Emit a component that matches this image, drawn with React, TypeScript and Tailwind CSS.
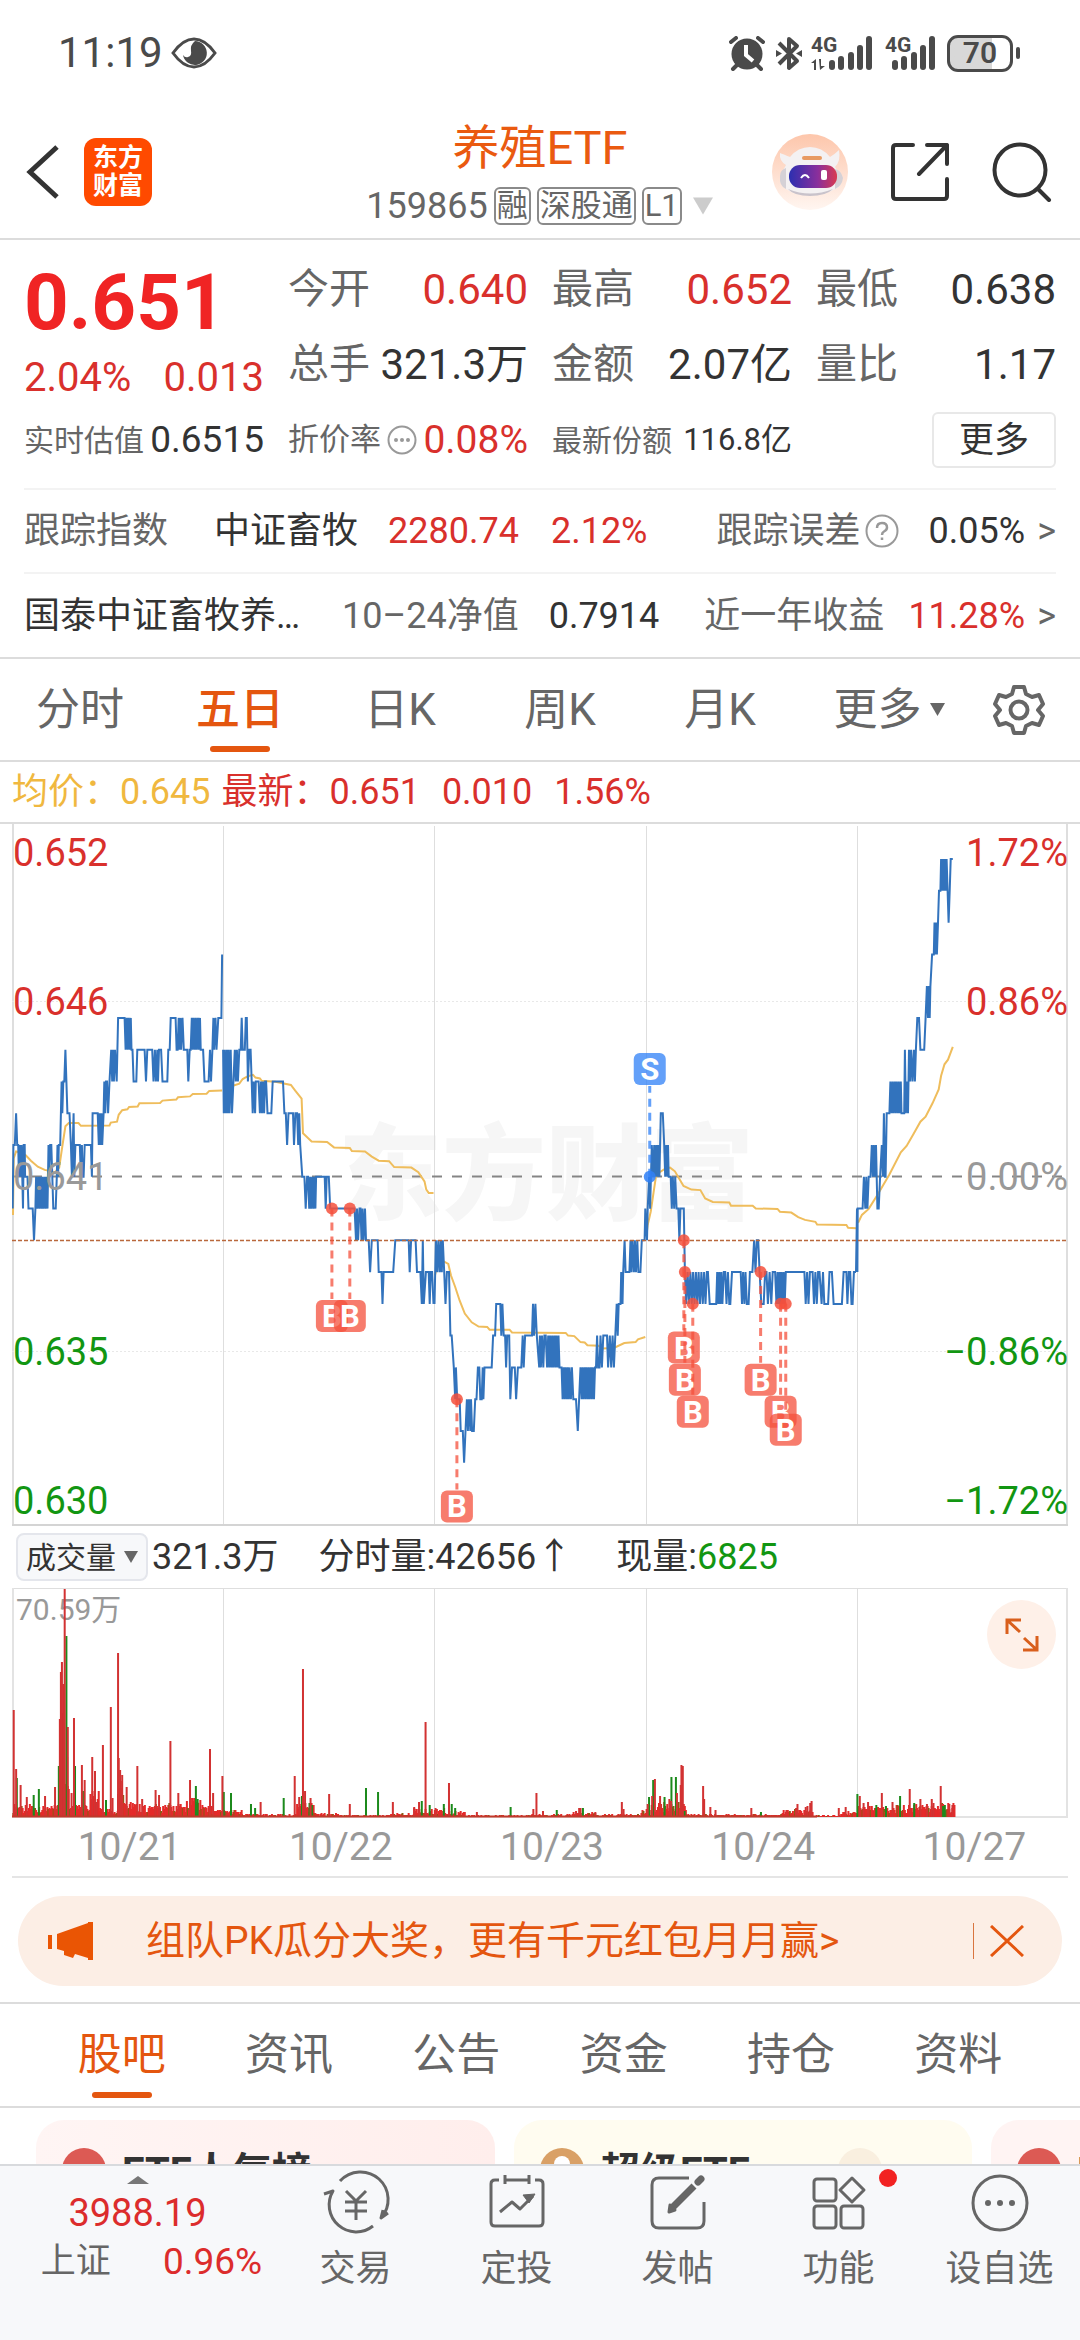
import React, {useState} from 'react';

type Point = [number, number];

// price chart: one unit is a tick of 0.001 round the previous close 0.641
const toX = (t: number) => (t - 35) / 2.904;
const toY = (u: number) => (u - 11) / 2.178 + 2;
const tick = (level: number) => 775 - 69.2 * level;

const swing = (from: number, to: number, a: number, b: number, step = 3): Point[] => {
    const out: Point[] = [];
    for (let t = from, i = 0; t <= to; t += step, i++) {
        out.push([t, i % 2 ? b : a]);
    }
    return out;
};

const shift = (points: Point[]): Point[] => points.map(([t, v]) => [t + 1568, v]);

const price: Point[][] = [
    [
        [36, 0], [37, -1], [39, 1], [43, 1], [47, 2], [50, 1], [53, 1], [55, 0], [57, 1], [60, 0], [63, 1], [67, -1], [69, 1],
        [72, 1], [73, 0], [80, 0], [83, -1], [95, -1], [99, -2], [103, -1], [105, 0], ...swing(108, 138, -1, 0), [141, 1],
        [143, 0], [146, 1], [149, 1], [152, 0], [155, -1], [162, -1], [165, 0], [167, 1], [169, 0], [171, 1], [175, 1],
        [179, 3], [181, 2], [184, 3], [187, 3], [190, 4], [193, 3], [196, 2], [202, 2], [206, 1], [209, 0], [214, 2],
        [216, 0], [219, 1], [232, 1], [235, 0], [238, 1], [240, 0], [243, 0], [246, 1], [264, 1], [267, 0], [269, 2],
        [284, 2], [287, 1], [289, 2], [291, 1], [295, 2], [297, 1], [301, 2], [303, 3], [306, 2], [308, 3], [311, 3],
        [314, 2], [318, 3], [323, 4], [326, 3], [329, 4], [331, 3], [334, 4], [339, 3], [343, 5], [362, 5], [365, 4],
        [368, 5], [371, 4], [374, 5], [377, 4], [380, 5], [382, 4], [385, 4], [388, 3], [396, 3], [399, 4], [420, 4],
        [424, 3], [428, 4], [442, 4], [446, 3], [450, 4], [453, 3], [457, 4], [459, 3], [462, 4], [468, 4], [472, 3],
        [486, 3], [489, 4], [493, 4], [496, 5], [510, 5], [513, 4], [516, 4], [519, 5], [521, 4], [524, 5], [526, 4],
        [530, 5], [534, 4], [544, 4], [547, 3], [551, 4], [554, 4], ...swing(557, 581, 5, 4), [583, 4], [590, 4],
        [594, 3], [606, 3], [610, 4], [613, 3], [617, 4], [620, 5], [622, 4], [626, 5], [629, 4], [634, 5], [643, 5], [645, 7],
    ],
    [
        [648, 4], [650, 2], [653, 4], [656, 2], [659, 4], [661, 2], [664, 4], [667, 2], [670, 4], [674, 2], [678, 3],
        [682, 4], [685, 3], [688, 4], [691, 3], [695, 4], [699, 4], [702, 5], [705, 4], [711, 4], [714, 5], [717, 5],
        [720, 3], [724, 4], [728, 4], [731, 3], [734, 2], [737, 3], [741, 2], [743, 3], [751, 3], [755, 2], [758, 3],
        [761, 2], [764, 3], [767, 2], [770, 3], [773, 3], [777, 2], [788, 2], [792, 3], [822, 3], [826, 2], [830, 2],
        [834, 1], [838, 2], [851, 2], [854, 1], [858, 2], [863, 2], [866, 1], [869, 2], [872, 1], [878, 0], [884, 0],
        [888, -1], [892, 0], [895, 0], ...swing(898, 916, -1, 0), [918, 0], [943, 0], [946, -1], [949, 0], [955, 0],
        [959, -1], [1030, -1], [1034, -2], [1037, -1], [1040, -2], [1044, -1], [1047, -1], [1050, -2], [1053, -1],
        [1056, -2], [1060, -1], [1063, -2], [1071, -2], [1075, -3], [1080, -2], [1097, -2], [1100, -3], [1108, -3],
        [1111, -4], [1114, -3], [1142, -3], [1148, -2], [1187, -2], [1190, -3], [1194, -2], [1207, -2], [1211, -3],
        [1221, -3], [1225, -4], [1228, -2], [1231, -4], [1237, -3], [1245, -3], [1248, -4], [1251, -3], [1255, -3], [1259, -4],
    ],
    [
        [1262, -4], [1266, -2], [1270, -3], [1273, -2], [1277, -3], [1280, -2], [1283, -3], [1286, -2], [1290, -3],
        [1294, -4], [1298, -3], [1304, -3], [1308, -5], [1312, -5], [1318, -6], [1322, -7], [1324, -6], [1328, -7],
        [1335, -7], [1338, -8], [1344, -8], [1348, -9], [1352, -8], [1356, -7], [1359, -8], [1362, -7], [1366, -8],
        [1368, -7], [1371, -8], [1376, -8], [1380, -7], [1384, -7], [1388, -6], [1392, -6], [1395, -7], [1399, -7],
        [1402, -6], [1404, -7], [1407, -6], [1428, -6], [1432, -5], [1438, -5], [1441, -4], [1453, -4], [1456, -5],
        [1459, -4], [1463, -5], [1467, -5], [1470, -6], [1473, -5], [1479, -5], [1482, -7], [1487, -6], [1495, -6],
        [1499, -7], [1504, -6], [1514, -6], [1518, -5], [1521, -6], [1525, -5], [1545, -5], [1548, -4], [1551, -5],
        [1555, -4], [1559, -5], [1566, -6],
        ...shift([
            [0, -5], [3, -6], [6, -5], [10, -6], [13, -5], [17, -5], [21, -6], ...swing(24, 54, -5, -6), [57, -6], [63, -6],
            ...swing(66, 84, -7, -6), [86, -6], [90, -7], [93, -6], [97, -7], [105, -7], [110, -8], [114, -7],
            ...swing(118, 160, -6, -7), [163, -6], [166, -5], [169, -6], [173, -6], [176, -5], [180, -6], [184, -5],
            [195, -5], [198, -6], [203, -5], [207, -6], [211, -5], [215, -6], [219, -5], [223, -4], [226, -5], [229, -4],
            [234, -4], [236, -3], [240, -4], [242, -3], [246, -2], [249, -3], [260, -3], [263, -2], [266, -3], [269, -2],
            [273, -3], [276, -2], [279, -3], [283, -2], [286, -3], [292, -3], [296, -2], [304, -2],
        ]),
    ],
    shift([
        [304, -2], [306, -1], [311, -2], [313, -1], [317, 0], [320, -1], [325, 1], [329, 0], [332, 1], [335, 0], [338, 1], [341, 0],
        [344, 1], [347, 0], [351, 2], [357, 2], [361, 1], [364, 0], [367, 1], [370, 0], [372, 1], [374, 0], [380, 0],
        [383, -1], [386, 0], [390, -1], [393, 0], [397, -1], [402, -1], [405, -2], [408, -1], [418, -1], [421, -3],
        ...swing(425, 485, -4, -3, 4), [488, -3], [493, -4], [508, -4], ...swing(512, 532, -4, -3), [534, -3], [538, -3],
        [542, -4], [546, -3], [550, -4], [553, -4], [558, -3], [583, -3], [587, -4], [590, -3], [594, -4], [597, -3],
        [601, -4], [606, -4], [610, -3], [617, -3], [622, -2], [626, -3], [630, -2], [634, -2], [638, -3], [643, -4],
        [650, -4], [654, -3], [658, -3], [662, -4], [667, -3], [672, -4], [676, -3], [683, -3], ...swing(687, 711, -4, -3),
        [714, -3], [768, -3], [772, -4], [776, -3], [780, -4], [784, -3], [792, -3], [796, -4], [800, -3], [804, -4],
        [808, -3], [812, -3], [818, -4], [822, -3], [826, -4], [837, -4], [841, -3], [848, -3], [853, -4], [877, -4],
        [882, -3], [890, -3], [893, -4], [897, -3], [901, -3], [905, -4], [908, -4], [912, -3], [918, -3],
    ]),
    shift([
        [918, -3], [921, -1], [922, -3], [923, -1], [937, -1], [941, 0], [945, -1], [948, 0], [951, -1], [955, 0], [960, 0], [964, 1],
        [967, 0], [970, 1], [973, 0], [976, 1], [980, -1], [984, -1], [988, 0], [993, 1], [996, 0], [999, 2], [1002, 0],
        [1004, 0], [1007, 2], [1015, 2], ...swing(1018, 1048, 3, 2), [1050, 2], [1058, 2], [1060, 4], [1063, 2],
        [1066, 3], [1069, 2], [1072, 4], [1075, 3], [1078, 4], [1082, 3], [1086, 4], [1089, 3], [1092, 4], [1096, 5],
        [1101, 5], [1105, 4], [1116, 4], [1120, 5], [1124, 6], [1127, 5], [1130, 6], [1132, 5], [1134, 6], [1139, 7],
        [1144, 7], [1146, 8], [1149, 7], [1151, 8], [1153, 7], [1156, 8], [1159, 9], [1163, 9], ...swing(1165, 1181, 10, 9, 2),
        [1184, 9], [1187, 8], [1190, 9], [1193, 10], [1199, 10],
    ]),
];

const average: Point[][] = [
    [
        [38, 858], [40, 735], [47, 720], [60, 722], [75, 728], [90, 740], [110, 753], [130, 760], [160, 765], [172, 755],
        [180, 715], [190, 665], [200, 658], [228, 658], [235, 664], [318, 663], [322, 657], [340, 655], [345, 640],
        [355, 630], [370, 628], [375, 623], [400, 622], [405, 615], [465, 614], [472, 609], [512, 607], [517, 602],
        [552, 600], [560, 595], [600, 594], [608, 588], [645, 587],
    ],
    [
        [650, 590], [660, 582], [672, 578], [695, 572], [705, 562], [720, 556], [735, 553], [742, 559], [755, 561],
        [760, 566], [800, 568], [845, 575], [858, 588], [876, 605], [880, 680], [890, 687], [905, 698], [950, 699],
        [970, 711], [1016, 712], [1022, 719], [1060, 720], [1080, 731], [1100, 740], [1130, 741], [1145, 754],
        [1195, 755], [1215, 765], [1233, 785], [1238, 803], [1245, 810], [1259, 810],
    ],
    [
        [1263, 990], [1268, 975], [1278, 958], [1290, 960], [1302, 965], [1310, 990], [1322, 1015], [1335, 1045],
        [1350, 1073], [1370, 1092], [1390, 1101], [1415, 1102], [1422, 1108], [1480, 1108], [1487, 1114],
        ...shift([
            [75, 1115], [82, 1121], [100, 1122], [118, 1135], [130, 1136], [138, 1142], [170, 1143], [182, 1149],
            [215, 1148], [245, 1137], [278, 1135], [285, 1129], [306, 1124],
        ]),
    ],
    shift([
        [309, 905], [313, 880], [322, 850], [330, 810], [337, 775], [348, 765], [365, 757], [378, 755], [392, 763],
        [405, 780], [417, 795], [440, 803], [466, 804], [480, 822], [502, 830], [550, 831], [555, 838], [618, 838],
        [627, 844], [690, 845], [697, 851], [730, 853], [750, 863], [770, 869], [800, 873], [805, 879], [890, 880],
        [895, 886], [918, 887],
    ]),
    shift([
        [924, 875], [935, 858], [955, 845], [980, 815], [1015, 770], [1048, 722], [1065, 708], [1085, 682], [1105, 655],
        [1120, 644], [1140, 615], [1158, 585], [1165, 555], [1175, 530], [1185, 520], [1199, 492],
    ]),
];

const trades = [
    {t: 964, level: -1, box: 1078, side: 'B'},
    {t: 1016, level: -1, box: 1078, side: 'B'},
    {t: 1327, level: -7, box: 1493, side: 'B'},
    {t: 1986, level: -2, box: 1147, side: 'B'},
    {t: 1989, level: -3, box: 1217, side: 'B'},
    {t: 2012, level: -4, box: 1287, side: 'B'},
    {t: 2209, level: -3, box: 1217, side: 'B'},
    {t: 2267, level: -4, box: 1287, side: 'B'},
    {t: 2282, level: -4, box: 1326, side: 'B'},
    {t: 1887, level: 0, box: 540, side: 'S'},
];

const redBars: Point[] = [
    [40, 107], [47, 48], [60, 32], [78, 20], [131, 21], [160, 30], [174, 98], [177, 145], [180, 155], [184, 133], [188, 228],
    [197, 90], [215, 99], [208, 24], [238, 52], [246, 37], [268, 60], [276, 46], [281, 15], [299, 72], [322, 110], [327, 19],
    [343, 164], [345, 59], [349, 47], [355, 42], [351, 36], [368, 30], [399, 51], [413, 18], [452, 27], [462, 22], [495, 76], [518, 24],
    [552, 37], [610, 68], [619, 24], [646, 41], [757, 15], [856, 41], [880, 148], [886, 26], [869, 20], [902, 19], [956, 23],
    [1016, 13], [1141, 15], [1236, 95], [1217, 15], [1203, 10], [1304, 34], [1265, 9], [1385, 5], [1558, 24], [1549, 8],
    [1577, 6], [1673, 6], [1682, 9], [1686, 9], [1729, 5], [1806, 15], [1811, 8], [1881, 13], [1894, 21], [1902, 38], [1917, 21],
    [1944, 18], [1949, 16], [1966, 24], [1977, 32], [1979, 52], [1983, 51], [2042, 31], [2045, 18], [2063, 10], [2078, 7],
    [2182, 9], [2284, 7], [2312, 9], [2316, 13], [2340, 10], [2345, 11], [2353, 14], [2357, 16], [2436, 9], [2456, 10],
    [2497, 21], [2508, 14], [2521, 15], [2561, 24], [2592, 15], [2642, 28], [2673, 18], [2692, 13], [2706, 18], [2711, 14],
    [2732, 31], [2757, 13], [2766, 12],
];

const greenBars: Point[] = [
    [49, 39], [98, 22], [113, 28], [171, 51], [183, 104], [193, 181], [195, 60], [218, 51], [241, 26], [308, 17], [569, 31],
    [574, 18], [650, 25], [671, 24], [729, 13], [741, 9], [824, 19], [877, 21], [899, 14], [906, 12], [1063, 29], [1098, 25],
    [1225, 16], [1248, 12], [1289, 13], [1312, 13], [1322, 9], [1483, 10], [1617, 7], [1693, 9], [1885, 20], [1897, 37],
    [1930, 20], [1950, 40], [1963, 40], [1988, 6], [2210, 5], [2490, 23], [2545, 12], [2573, 11], [2614, 21], [2655, 14],
    [2744, 12], [2739, 11],
];

// background turnover: from, to, highest bar
const turnover: [number, number, number][] = [
    [36, 96, 14], [96, 170, 12], [170, 200, 40], [200, 260, 12], [260, 285, 26], [285, 340, 9], [340, 362, 34], [362, 385, 21],
    [385, 420, 15], [420, 480, 13], [480, 540, 14], [540, 585, 20], [585, 615, 13], [615, 700, 7], [700, 860, 3],
    [860, 910, 14], [910, 980, 4], [980, 1130, 2], [1130, 1200, 4], [1200, 1290, 9], [1290, 1350, 6], [1350, 1540, 2],
    [1540, 1660, 3], [1660, 1730, 5], [1730, 1860, 3], [1860, 1890, 8], [1890, 1990, 15], [1990, 2270, 3],
    [2270, 2360, 8], [2360, 2440, 2], [2440, 2490, 6], [2490, 2640, 12], [2640, 2770, 14],
];

const noise = turnover.flatMap(([from, to, top], row) => {
    const bars = [];
    for (let t = from, i = row * 7; t < to; t += 3, i++) {
        const r = Math.abs(Math.sin(i * 12.9898) * 43758.5453) % 1;
        bars.push({t, h: Math.max(1, Math.round(top * (0.3 + r * 0.7))), green: (i * 5) % 13 < 2});
    }
    return bars;
});

const line = (points: Point[]) => points.map(([t, v]) => `${toX(t).toFixed(1)},${toY(v).toFixed(1)}`).join(' ');

const Label = ({x = 1, y, color, end, children}: any) => (
    <text x={x} y={y} fill={color} fontSize="38" textAnchor={end ? 'end' : 'start'}>{children}</text>
);

const PriceChart = () => (
    <svg viewBox="0 0 1056 702" className="block w-full" role="img" aria-label="五日">
        <text x="534" y="388" textAnchor="middle" fontSize="104" fontWeight="900" fill="#f6f6f6">东方财富</text>
        <g stroke="#dedede">
            {[211, 422, 634, 845].map((x) => <path key={x} d={`M${x}.5 2V701`}/>)}
            <path d="M1 0V702M1055 0V702" strokeWidth="2"/>
            <path d="M0 701H1056" strokeWidth="2" stroke="#d4d4d4"/>
            <path d="M0 177.500H1056M0 527.500H1056" strokeDasharray="2 2" stroke="#e8e8e8"/>
        </g>
        <Label y="42" color="#d9302c">0.652</Label>
        <Label y="191" color="#d9302c">0.646</Label>
        <Label y="541" color="#129612">0.635</Label>
        <Label y="690" color="#129612">0.630</Label>
        <Label x="1056" y="42" end color="#d9302c">1.72%</Label>
        <Label x="1056" y="191" end color="#d9302c">0.86%</Label>
        <Label x="1056" y="541" end color="#129612">−0.86%</Label>
        <Label x="1056" y="690" end color="#129612">−1.72%</Label>
        <path d="M0 352.500H1056" stroke="#858585" strokeWidth="2" strokeDasharray="10 10"/>
        {average.map((day, index) => (
            <polyline key={index} points={line(day)} fill="none" stroke="#efbd5c" strokeWidth="2"/>
        ))}
        {price.map((day, index) => (
            <polyline
                key={index}
                points={line(day.map(([t, level]) => [t, tick(level)]))}
                fill="none"
                stroke="#3273bd"
                strokeWidth="2"
            />
        ))}
        <path d="M0 416.500H1056" stroke="#b9683c" strokeWidth="1.500" strokeDasharray="4 2"/>
        <Label y="366" color="#999">0.641</Label>
        <Label x="1056" y="366" end color="#999">0.00%</Label>
        {trades.map(({t, level, box, side}) => {
            const x = toX(t);
            const y = toY(tick(level));
            const boxY = toY(box);
            const color = side === 'B' ? '#f4503c' : '#2f80f7';
            return (
                <g key={t}>
                    <path
                        d={`M${x} ${y}V${side === 'B' ? boxY - 17 : boxY + 17}`}
                        stroke={color}
                        strokeWidth="3"
                        strokeOpacity=".75"
                        strokeDasharray="8 6"
                    />
                    <circle cx={x} cy={y} r="6" fill={color} fillOpacity=".85"/>
                    <rect x={x - 16} y={boxY - 16} width="32" height="32" rx="6" fill={color} fillOpacity=".75"/>
                    <text x={x} y={boxY + 11} textAnchor="middle" fontSize="31" fontWeight="700" fill="#fff">{side}</text>
                </g>
            );
        })}
    </svg>
);

const VolumeChart = () => (
    <svg viewBox="0 0 1056 230" className="block w-full" role="img" aria-label="成交量">
        <path d="M211.500 0V229M422.500 0V229M634.500 0V229M845.500 0V229M0 .5H1056" stroke="#dedede"/>
        <path d="M1 0V230M1055 0V230M0 229H1056" stroke="#e3e3e3" strokeWidth="2"/>
        <text x="4" y="32" fontSize="30" fill="#999">70.59万</text>
        {noise.map(({t, h, green}) => (
            <rect key={t} x={toX(t)} y={229 - h} width="2" height={h} fill={green ? '#8a5a14' : '#e42a2a'}/>
        ))}
        {greenBars.map(([t, h]) => <rect key={t} x={toX(t) - 1} y={229 - h} width="2" height={h} fill="#1c8a1c"/>)}
        {redBars.map(([t, h]) => <rect key={t} x={toX(t) - 1} y={229 - h} width="2" height={h} fill="#d23232"/>)}
        <path d="M0 228.500H805" stroke="#c0392b" strokeWidth="2"/>
    </svg>
);

const Caret = ({className}: { className: string }) => (
    <svg viewBox="0 0 14 14" className={className} aria-hidden="true"><path d="M0 1H14L7 13Z" fill="currentColor"/></svg>
);

const StatusBar = () => (
    <div className="flex h-[100px] items-center justify-between pt-[6px] pr-[60px] pl-[58px] text-[#4a4a4a]">
        <div className="flex items-center gap-2">
            <span className="text-[42px] leading-none">11:19</span>
            <svg viewBox="0 0 46 32" className="h-8 w-[46px]" fill="none">
                <path d="M2 16Q12 2 23 2T44 16Q34 30 23 30T2 16Z" stroke="currentColor" strokeWidth="3"/>
                <path d="M24 4A12 12 0 1 1 12 18Q14 21 17 20Q21 19 20 14Q19 8 24 4Z" fill="currentColor"/>
            </svg>
        </div>
        <div className="flex items-center">
            <svg viewBox="0 0 36 35" className="h-[35px] w-9" fill="none" stroke="currentColor">
                <circle cx="18" cy="18" r="15.500" fill="currentColor" stroke="none"/>
                <path d="M2 6 7 2M34 6 29 2M8 29 4 33M28 29 32 33" strokeWidth="4" strokeLinecap="round"/>
                <path d="M17 9V19L24 25" stroke="#fff" strokeWidth="4"/>
            </svg>
            <svg viewBox="0 0 26 35" className="ml-[11px] h-[35px] w-[26px]" fill="none" stroke="currentColor" strokeWidth="4">
                <path d="M3 7 21 25 13 32V3L21 10 3 28" strokeLinejoin="round"/>
                <path d="M0 14 6 17.500 0 21ZM26 14 20 17.500 26 21Z" fill="currentColor" stroke="none"/>
            </svg>
            <svg viewBox="0 0 62 36" className="ml-[9px] h-9 w-[62px] overflow-visible" fill="currentColor">
                <text x="0" y="17" fontSize="21" fontWeight="700">4G</text>
                <path d="M0 28 5 24V35H3V28ZM8 24H10V31H14L9 35Z"/>
                <rect x="18" y="25" width="6" height="10" rx="3"/>
                <rect x="27" y="21" width="6" height="14" rx="3"/>
                <rect x="37" y="17" width="6" height="18" rx="3"/>
                <rect x="46" y="10" width="6" height="25" rx="3"/>
                <rect x="55" y="1" width="6" height="34" rx="3"/>
            </svg>
            <svg viewBox="0 0 50 36" className="ml-3 h-9 w-[50px] overflow-visible" fill="currentColor">
                <text x="0" y="17" fontSize="21" fontWeight="700">4G</text>
                <rect x="7" y="25" width="6" height="10" rx="3"/>
                <rect x="16" y="21" width="6" height="14" rx="3"/>
                <rect x="26" y="17" width="6" height="18" rx="3"/>
                <rect x="35" y="10" width="6" height="25" rx="3"/>
                <rect x="44" y="1" width="6" height="34" rx="3"/>
            </svg>
            <div className="ml-3 flex h-[37px] w-[66px] items-center justify-center rounded-[11px] border-[3px] border-current bg-linear-to-r from-[#d8d8d8] from-70% to-white to-70% text-[30px] leading-none font-semibold">
                70
            </div>
            <div className="ml-[3px] h-3 w-1 rounded-sm bg-current"/>
        </div>
    </div>
);

const Robot = () => (
    <svg viewBox="0 0 76 76" className="size-[76px]">
        <defs>
            <linearGradient id="halo" x2="0" y2="1"><stop stopColor="#fdc6ab"/><stop offset="1" stopColor="#fff6f1"/></linearGradient>
            <linearGradient id="visor"><stop stopColor="#2c2fb0"/><stop offset=".6" stopColor="#8a2f9c"/><stop offset="1" stopColor="#d93a50"/></linearGradient>
        </defs>
        <circle cx="38" cy="38" r="38" fill="url(#halo)"/>
        <path d="M8 19Q11 20 18 23Q26 13 38 13T58 23Q63 20 67 16Q69 27 63 33L70 44Q70 53 63 55Q54 61 38 61T14 55Q8 52 8 42L14 31Q7 27 8 19Z" fill="#f4f1f2"/>
        <path d="M8 42Q8 36 14 34V55Q7 52 8 42ZM71 44Q69 36 63 35V55Q70 52 71 44Z" fill="#d5d1d6"/>
        <path d="M16 55Q38 64 61 55Q54 62 38 62T16 55Z" fill="#c9c3cb"/>
        <rect x="30" y="22" width="20" height="4" rx="2" fill="#e89a62"/>
        <rect x="17" y="31" width="48" height="23" rx="11" fill="url(#visor)"/>
        <path d="M29 44Q33 38 37 44" fill="none" stroke="#fff" strokeWidth="2"/>
        <rect x="49" y="36" width="6" height="10" rx="2" fill="#fff"/>
    </svg>
);

const Tag = ({children}: any) => (
    <span className="rounded-md border-2 border-[#8a8a8a] px-px text-[31px] leading-[34px]">{children}</span>
);

const Header = () => (
    <header className="flex h-[140px] items-center justify-between border-b-2 border-[#dcdcdc] pt-[6px] pr-[28px] pl-[26px]">
        <div className="flex w-[282px] items-center gap-6">
            <button type="button" aria-label="返回">
                <svg viewBox="0 0 34 56" className="h-14 w-[34px]" fill="none" stroke="#333" strokeWidth="5">
                    <path d="M31 3 4 28 31 53"/>
                </svg>
            </button>
            <div className="flex size-[68px] flex-col items-center justify-center rounded-xl bg-[#ff4a00] text-[25px] leading-[28px] font-bold text-white">
                <span>东方</span>
                <span>财富</span>
            </div>
        </div>
        <div className="flex flex-col items-center pt-[2px]">
            <h1 className="text-[47px] leading-[66px] text-[#ea5a10]">养殖ETF</h1>
            <div className="flex items-center gap-[6px] text-[36px] leading-[50px] text-[#666]">
                <span>159865</span>
                <Tag>融</Tag>
                <Tag>深股通</Tag>
                <Tag>L1</Tag>
                <Caret className="ml-1 h-5 w-[22px] text-[#ccc]"/>
            </div>
        </div>
        <div className="flex w-[280px] items-center justify-between">
            <Robot/>
            <button type="button" aria-label="分享">
                <svg viewBox="0 0 58 58" className="size-[58px]" fill="none" stroke="#333" strokeWidth="4" strokeLinecap="round" strokeLinejoin="round">
                    <path d="M22 2H5Q2 2 2 5V53Q2 56 5 56H53Q56 56 56 53V36M36 2H56V21M56 2 28 31"/>
                </svg>
            </button>
            <button type="button" aria-label="搜索">
                <svg viewBox="0 0 60 60" className="size-[60px]" fill="none" stroke="#333" strokeWidth="4" strokeLinecap="round">
                    <circle cx="28" cy="28" r="25.500"/>
                    <path d="M46 47 57 58"/>
                </svg>
            </button>
        </div>
    </header>
);

const Quote = ({label, value, red}: { label: string, value: string, red?: boolean }) => (
    <div className="flex items-center justify-between whitespace-nowrap">
        <span className="text-[41px] text-[#666]">{label}</span>
        <span className={red ? 'text-[42px] text-[#d9302c]' : 'text-[42px] text-[#333]'}>{value}</span>
    </div>
);

const Quotes = () => (
    <section className="px-6 whitespace-nowrap">
        <div className="grid grid-cols-4 gap-x-6">
            <div className="flex flex-col pt-6 text-[#d9302c]">
                <strong className="text-[78px] leading-[78px] font-bold text-[#f02424]">0.651</strong>
                <div className="flex justify-between pt-2 text-[40px] leading-[56px]">
                    <span>2.04%</span>
                    <span>0.013</span>
                </div>
            </div>
            <div className="col-span-3 grid grid-cols-3 gap-x-6 pt-3 pb-1 leading-[75px]">
                <Quote label="今开" value="0.640" red/>
                <Quote label="最高" value="0.652" red/>
                <Quote label="最低" value="0.638"/>
                <Quote label="总手" value="321.3万"/>
                <Quote label="金额" value="2.07亿"/>
                <Quote label="量比" value="1.17"/>
            </div>
        </div>
        <div className="grid h-[84px] grid-cols-4 items-center gap-x-6 border-b-2 border-[#f3f3f3] pb-[14px] text-[#333]">
            <div className="flex items-center justify-between">
                <span className="text-[30px] text-[#666]">实时估值</span>
                <span className="text-[37px]">0.6515</span>
            </div>
            <div className="flex items-center justify-between">
                <span className="text-[31px] text-[#666]">折价率</span>
                <svg viewBox="0 0 30 30" className="size-[30px] text-[#999]" fill="currentColor">
                    <circle cx="15" cy="15" r="13.500" fill="none" stroke="currentColor" strokeWidth="2"/>
                    <circle cx="9" cy="15" r="2"/><circle cx="15" cy="15" r="2"/><circle cx="21" cy="15" r="2"/>
                </svg>
                <span className="text-[39px] text-[#d9302c]">0.08%</span>
            </div>
            <div className="flex items-center justify-between">
                <span className="text-[30px] text-[#666]">最新份额</span>
                <span className="text-[31px]">116.8亿</span>
            </div>
            <button type="button" className="h-14 w-[124px] justify-self-end rounded-md border-2 border-[#e8e8e8] text-[35px] leading-none">更多</button>
        </div>
        <div className="flex h-[84px] items-center border-b-2 border-[#f3f3f3] text-[36px] text-[#333]">
            <span className="text-[#666]">跟踪指数</span>
            <span className="ml-[46px]">中证畜牧</span>
            <span className="ml-[30px] text-[#d9302c]">2280.74</span>
            <span className="ml-8 text-[#d9302c]">2.12%</span>
            <span className="ml-auto text-[#666]">跟踪误差</span>
            <svg viewBox="0 0 34 34" className="ml-1 size-[34px] text-[#999]" fill="none" stroke="currentColor" strokeWidth="2">
                <circle cx="17" cy="17" r="15.500"/>
                <path d="M12 14Q12 9 17 9T22 13.500Q22 16 19 17.500Q17 18.500 17 21M17 23.500V26" strokeWidth="2.500"/>
            </svg>
            <span className="ml-[30px]">0.05%</span>
            <span className="ml-3 text-[#666]">&gt;</span>
        </div>
        <div className="flex h-[83px] items-center text-[36px] text-[#333]">
            <span>国泰中证畜牧养…</span>
            <span className="ml-[42px] text-[#666]">10–24净值</span>
            <span className="ml-[30px]">0.7914</span>
            <span className="ml-auto text-[#666]">近一年收益</span>
            <span className="ml-6 text-[#d9302c]">11.28%</span>
            <span className="ml-3 text-[#666]">&gt;</span>
        </div>
    </section>
);

const periods = ['分时', '五日', '日K', '周K', '月K'];

const PeriodTabs = () => {
    const [active, setActive] = useState('五日');

    return (
        <nav className="flex h-[105px] items-stretch border-y-2 border-[#dcdcdc] pr-5 text-[44px] text-[#666]">
            {periods.map((period) => (
                <button
                    key={period}
                    type="button"
                    onClick={() => setActive(period)}
                    className={`relative flex-[160] ${active === period ? 'font-medium text-[#e4560f]' : ''}`}
                >
                    {period}
                    {active === period && (
                        <span className="absolute bottom-2 left-1/2 h-[6px] w-[60px] -translate-x-1/2 rounded-full bg-[#e4560f]"/>
                    )}
                </button>
            ))}
            <button type="button" className="flex flex-[178] items-center justify-center gap-2">
                更多
                <Caret className="size-[15px]"/>
            </button>
            <button type="button" aria-label="设置" className="flex flex-[82] items-center justify-center">
                <svg viewBox="0 0 52 52" className="size-[52px]" fill="none" stroke="currentColor" strokeWidth="4" strokeLinejoin="round">
                    <path d="M21 3H31L33 10L39 13L46 11L50 20L45 26L50 32L46 41L39 39L33 42L31 49H21L19 42L13 39L6 41L2 32L7 26L2 20L6 11L13 13L19 10Z"/>
                    <circle cx="26" cy="26" r="8.500"/>
                </svg>
            </button>
        </nav>
    );
};

const boardTabs = ['股吧', '资讯', '公告', '资金', '持仓', '资料'];

const BoardTabs = () => {
    const [active, setActive] = useState('股吧');

    return (
        <nav className="flex h-[106px] shrink-0 border-y-2 border-[#dcdcdc] px-[38px] text-[44px] text-[#666]">
            {boardTabs.map((tab) => (
                <button
                    key={tab}
                    type="button"
                    onClick={() => setActive(tab)}
                    className={`relative flex-1 ${active === tab ? 'text-[#e4560f]' : ''}`}
                >
                    {tab}
                    {active === tab && (
                        <span className="absolute bottom-2 left-1/2 h-[6px] w-[60px] -translate-x-1/2 rounded-full bg-[#e4560f]"/>
                    )}
                </button>
            ))}
        </nav>
    );
};

const Banner = () => (
    <div className="mx-[18px] mt-[18px] mb-4 flex h-[90px] items-center rounded-full bg-[#fceee5] pr-[38px] pl-[30px] text-[#e4560f]">
        <svg viewBox="0 0 46 38" className="h-[38px] w-[46px]" fill="#ea5504">
            <path d="M0 13H4V27H0ZM9 12 40 1V0H45V38H40V36L27 32 25 36 16 33V29L9 27Z"/>
        </svg>
        <a href="#activity" className="ml-[52px] text-[39px]">组队PK瓜分大奖，更有千元红包月月赢&gt;</a>
        <span className="ml-auto h-9 w-px bg-[#d9753f]"/>
        <button type="button" aria-label="关闭" className="ml-4">
            <svg viewBox="0 0 34 32" className="h-8 w-[34px]" fill="none" stroke="currentColor" strokeWidth="3"><path d="M1 1 33 31M33 1 1 31"/></svg>
        </button>
    </div>
);

const Boards = () => (
    <div className="flex min-h-0 flex-1 gap-[19px] overflow-hidden pt-3 pl-9 text-[40px] leading-[50px] font-bold whitespace-nowrap text-[#333]">
        <a href="#hot" className="flex h-40 w-[459px] shrink-0 gap-4 rounded-[28px] bg-linear-to-r from-[#fff5f4] to-[#ffeeec] pt-7 pl-[26px]">
            <span className="size-11 rounded-full bg-[#dc5a54]"/>
            <span>ETF人气榜</span>
        </a>
        <a href="#super" className="flex h-40 w-[458px] shrink-0 gap-4 rounded-[28px] bg-[#fffcf0] pt-7 pl-[26px]">
            <span className="size-11 rounded-full bg-[#d9a066] pt-2">
                <span className="mx-auto block size-4 rounded-full bg-white"/>
            </span>
            <span>超级ETF</span>
            <span className="ml-[72px] size-11 rounded-full bg-[#f9efdf]"/>
        </a>
        <a href="#more" className="flex h-40 w-[459px] shrink-0 gap-4 rounded-[28px] bg-[#fff4f3] pt-7 pl-[26px]">
            <span className="size-11 rounded-full bg-[#dc5a54]"/>
            <span>ETF</span>
        </a>
    </div>
);

const actions = [
    {
        label: '交易',
        icon: (
            <>
                <path d="M14 7A27 27 0 0 1 55 44L62 39M55 44 57 36M47 52A27 27 0 0 1 7 17L-2 20"/>
                <path d="M20 17 30 27 40 17M19 28H41M19 37H41M30 27V46"/>
            </>
        ),
    },
    {
        label: '定投',
        icon: (
            <>
                <path d="M12 6H8Q4 6 4 10V48Q4 52 8 52H52Q56 52 56 48V10Q56 6 52 6H48M18 6H42M18 1V10M42 1V10"/>
                <path d="M13 38 25 28 33 35 46 22"/>
                <path d="M36 21 48 20 42 29Z" fill="currentColor" strokeWidth="1"/>
            </>
        ),
    },
    {
        label: '发帖',
        icon: (
            <>
                <path d="M41 4H11Q4 4 4 11V47Q4 54 11 54H49Q56 54 56 47V28"/>
                <path d="M24 34 46 12" strokeWidth="7"/>
                <path d="M21 38 22 31 27 36Z" fill="currentColor"/>
                <path d="M50 8 53 5" strokeWidth="7" strokeLinecap="round"/>
            </>
        ),
    },
    {
        label: '功能',
        dot: true,
        icon: (
            <>
                <rect x="5" y="5" width="22" height="22" rx="3"/>
                <rect x="5" y="32" width="22" height="22" rx="3"/>
                <rect x="32" y="32" width="22" height="22" rx="3"/>
                <path d="M43 4 55 16 43 28 31 16Z"/>
            </>
        ),
    },
    {
        label: '设自选',
        icon: (
            <>
                <circle cx="30" cy="29" r="27"/>
                <g fill="currentColor" stroke="none"><circle cx="18" cy="29" r="3"/><circle cx="30" cy="29" r="3"/><circle cx="42" cy="29" r="3"/></g>
            </>
        ),
    },
];

const BottomBar = () => (
    <footer className="flex h-[176px] shrink-0 items-start border-t-2 border-[#d8dadd] bg-[#f7f8fa] text-[#666]">
        <button type="button" className="flex flex-[275] flex-col items-center pt-[10px] text-[#dc2c2c]">
            <svg viewBox="0 0 22 8" className="h-2 w-[22px] text-[#777]"><path d="M0 8 11 0 22 8Z" fill="currentColor"/></svg>
            <span className="text-[38px] leading-[58px]">3988.19</span>
            <span className="flex gap-[52px] pl-7 text-[37px] leading-10">
                <span className="text-[35px] text-[#666]">上证</span>
                <span>0.96%</span>
            </span>
        </button>
        {actions.map(({label, icon, dot}) => (
            <button key={label} type="button" className="flex flex-[161] flex-col items-center pt-2 text-[36px]">
                <span className="relative">
                    <svg viewBox="0 0 60 60" className="block size-[60px] overflow-visible" fill="none" stroke="currentColor" strokeWidth="3" strokeLinejoin="round">
                        {icon}
                    </svg>
                    {dot && <span className="absolute -top-[5px] -right-[28px] size-[18px] rounded-full bg-[#f22222]"/>}
                </span>
                <span className="mt-[10px] leading-[50px]">{label}</span>
            </button>
        ))}
    </footer>
);

export default () => (
    <div className="flex h-screen flex-col overflow-hidden bg-white font-[Roboto,'Noto_Sans_CJK_SC',sans-serif] text-[#333]">
        <StatusBar/>
        <Header/>
        <Quotes/>
        <PeriodTabs/>
        <div className="flex h-[62px] items-center border-b-2 border-[#dcdcdc] px-3 text-[36px] whitespace-pre text-[#d9302c]">
            <span className="text-[#f0b83f]">均价：0.645</span>
            <span className="ml-[11px]">最新：0.651</span>
            <span className="ml-[22px]">0.010</span>
            <span className="ml-[22px]">1.56%</span>
        </div>
        <div className="px-3">
            <PriceChart/>
            <div className="flex h-[62px] items-center text-[36px]">
                <button type="button" className="ml-1 flex h-12 w-[132px] items-center justify-center gap-2 rounded-lg border-2 border-[#e4e6ec] bg-[#f7f8fa] text-[30px]">
                    成交量
                    <Caret className="size-[14px] text-[#666]"/>
                </button>
                <span className="ml-1">321.3万</span>
                <span className="ml-10">分时量:42656↑</span>
                <span className="ml-11">现量:<span className="text-[#129612]">6825</span></span>
            </div>
            <div className="relative">
                <VolumeChart/>
                <button type="button" aria-label="全屏" className="absolute top-3 right-3 flex size-[69px] items-center justify-center rounded-full bg-[#fef0e8] text-[#d95f1c]">
                    <svg viewBox="0 0 34 34" className="size-[34px]" fill="none" stroke="currentColor" strokeWidth="3">
                        <path d="M2 16V2H16M2 2 15 14M32 18V32H18M32 32 19 20"/>
                    </svg>
                </button>
            </div>
            <div className="grid h-[60px] grid-cols-5 items-center border-b-2 border-[#e5e5e5] text-center text-[39px] text-[#999]">
                {['10/21', '10/22', '10/23', '10/24', '10/27'].map((day) => <span key={day} className="pl-6">{day}</span>)}
            </div>
        </div>
        <Banner/>
        <BoardTabs/>
        <Boards/>
        <BottomBar/>
    </div>
);
